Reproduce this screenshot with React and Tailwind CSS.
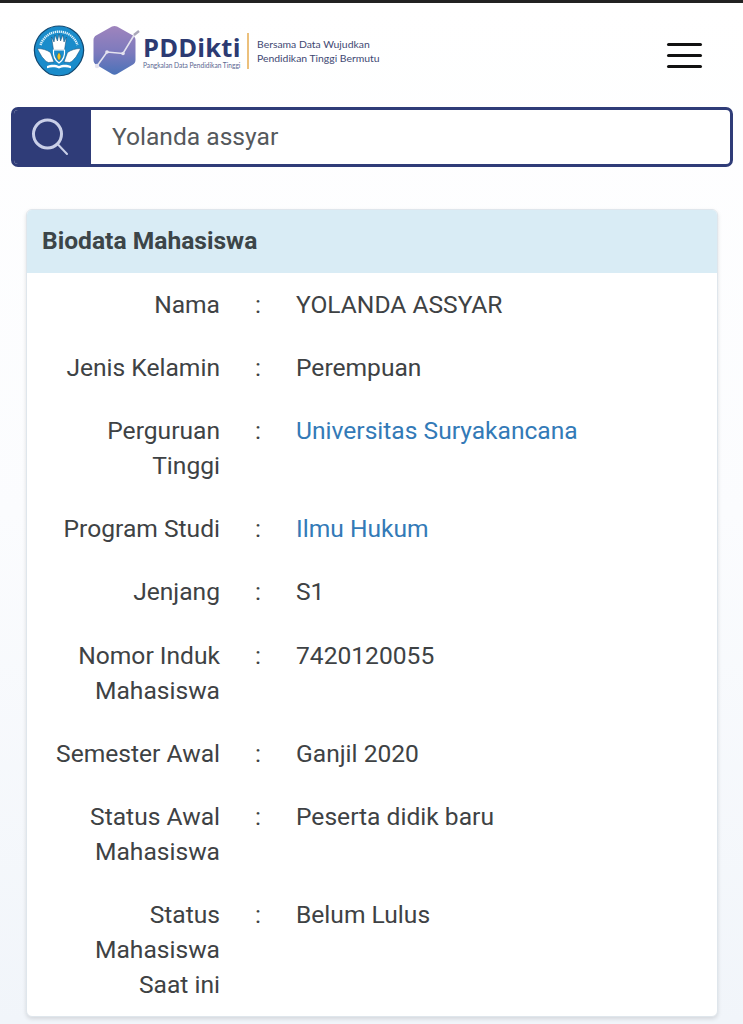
const rows = [
  { label: 'Nama', value: 'YOLANDA ASSYAR' },
  { label: 'Jenis Kelamin', value: 'Perempuan' },
  { label: 'Perguruan Tinggi', value: 'Universitas Suryakancana', link: true },
  { label: 'Program Studi', value: 'Ilmu Hukum', link: true },
  { label: 'Jenjang', value: 'S1' },
  { label: 'Nomor Induk Mahasiswa', value: '7420120055' },
  { label: 'Semester Awal', value: 'Ganjil 2020' },
  { label: 'Status Awal Mahasiswa', value: 'Peserta didik baru' },
  { label: 'Status Mahasiswa Saat ini', value: 'Belum Lulus' },
];

function Emblem() {
  return (
    <svg width="52" height="52" viewBox="0 0 52 52" className="shrink-0">
      <path d="M26 1 C31 1 36 2.5 40 5.5 C44.5 8.5 48.5 14 50 20 C51.5 26 50.5 31 48 36 C45 41.5 40.5 46 35.5 49 C30 51 22 51 16.5 49 C11.5 46 7 41.5 4 36 C1.5 31 0.5 26 2 20 C3.5 14 7.5 8.5 12 5.5 C16 2.5 21 1 26 1 Z" fill="#1a8ccb" stroke="#12476f" strokeWidth="1.2" />
      <path d="M7.5 20 A19.5 19.5 0 0 1 44.5 20" fill="none" stroke="#dff1fa" strokeWidth="2.4" strokeDasharray="1.3 0.7" />
      <path d="M18.5 12 L20.5 25 L31.5 25 L33.5 12 L31 17 L29.8 10 L27.6 16 L26 9 L24.4 16 L22.2 10 L21 17 Z" fill="#fff" stroke="#12476f" strokeWidth="0.5" />
      <path d="M4.5 23.5 C9 23.5 14 25 17.5 27.5 L21 37 L15.5 37.5 C12 36.5 11 33.5 9 32 C7.5 29 5.5 26.5 4.5 23.5 Z" fill="#fff" stroke="#12476f" strokeWidth="0.5" />
      <path d="M47.5 23.5 C43 23.5 38 25 34.5 27.5 L31 37 L36.5 37.5 C40 36.5 41 33.5 43 32 C44.5 29 46.5 26.5 47.5 23.5 Z" fill="#fff" stroke="#12476f" strokeWidth="0.5" />
      <path d="M20.5 25 L31.5 25 C32 30 30.5 35 26 38 C21.5 35 20 30 20.5 25 Z" fill="#1a8ccb" stroke="#fff" strokeWidth="1.2" />
      <path d="M26 27.5 C28.4 30 28.6 32.8 26 35.5 C23.4 32.8 23.6 30 26 27.5 Z" fill="#f3c322" stroke="#12476f" strokeWidth="0.4" />
      <path d="M14 41 C18.5 39 23 39.5 26 41 C29 39.5 33.5 39 38 41 L38 43.2 C33.5 41.6 29 42 26 43.6 C23 42 18.5 41.6 14 43.2 Z" fill="#fff" />
    </svg>
  );
}

function HexLogo() {
  return (
    <svg width="48" height="52" viewBox="0 0 48 52" className="shrink-0">
      <defs>
        <linearGradient id="hexFill" x1="0" y1="0" x2="0" y2="1">
          <stop offset="0" stopColor="#9f84bd" />
          <stop offset="0.55" stopColor="#7c7abd" />
          <stop offset="1" stopColor="#4a72b8" />
        </linearGradient>
      </defs>
      <path d="M19 1.5 C20.5 0.7 22.5 0.7 24 1.5 L40 10.5 C41.5 11.5 42.5 13 42.5 15 L42.5 35 C42.5 37 41.5 38.5 40 39.5 L24 49 C22.5 50 20.5 50 19 49 L3 39.5 C1.5 38.5 0.5 37 0.5 35 L0.5 15 C0.5 13 1.5 11.5 3 10.5 Z" fill="url(#hexFill)" />
      <path d="M4 41 L14 27 L30 28.5 L41.5 9.5" fill="none" stroke="#e4e3ef" strokeWidth="1.6" />
      <path d="M41 10 L46 6" fill="none" stroke="#a9a6b8" strokeWidth="2.4" />
      <circle cx="4" cy="41" r="2.2" fill="#e4e3ef" />
      <circle cx="14" cy="27" r="1.8" fill="#e4e3ef" />
      <circle cx="30" cy="28.5" r="1.8" fill="#e4e3ef" />
    </svg>
  );
}

export default function App() {
  return (
    <div className="h-[1024px] overflow-hidden border-t-[3px] border-[#222222] bg-gradient-to-b from-white via-[#fbfcfe] to-[#f1f5fa] font-['Roboto',sans-serif] text-[24.6px] leading-[35.1px] text-[#3e4244]">
      <header className="flex h-[104px] items-start justify-between pl-[33px] pr-[41px]">
        <div className="flex items-center pt-[22px]">
          <Emblem />
          <div className="ml-[8px]">
            <HexLogo />
          </div>
          <div className="ml-[2px] w-[100px] font-['Open_Sans',sans-serif]">
            <div className="mt-[2px] h-[26px] text-[25.5px] leading-[26px] font-bold tracking-[0.2px] text-[#2c3a72]">PDDikti</div>
            <div className="mt-[1px] font-['Lato',sans-serif] text-[6.6px] leading-[9px] whitespace-nowrap text-[#5a6690]">Pangkalan Data Pendidikan Tinggi</div>
          </div>
          <div className="ml-[4px] h-[36px] w-[2px] bg-[#ecc07c]" />
          <div className="ml-[8px] font-['Lato',sans-serif] text-[10.4px] leading-[14px] whitespace-nowrap text-[#3e4873]">
            <div>Bersama Data Wujudkan</div>
            <div>Pendidikan Tinggi Bermutu</div>
          </div>
        </div>
        <div className="mt-[40px] flex w-[35px] flex-col gap-[8.5px]">
          <div className="h-[2.5px] rounded-full bg-[#111111]" />
          <div className="h-[2.5px] rounded-full bg-[#111111]" />
          <div className="h-[2.5px] rounded-full bg-[#111111]" />
        </div>
      </header>

      <div className="ml-[11px] mr-[10px] flex h-[60px] overflow-hidden rounded-[7px] border-[3px] border-[#2f3c78] bg-white">
        <div className="flex w-[77px] items-center justify-center bg-[#2f3c78] pr-[5px]">
          <svg width="40" height="40" viewBox="0 0 40 40" fill="none">
            <circle cx="17.5" cy="17" r="14" stroke="#c9cfe8" strokeWidth="3" />
            <path d="M28 27.5 L37 37" stroke="#c9cfe8" strokeWidth="2" strokeLinecap="round" />
          </svg>
        </div>
        <div className="flex items-center pl-[21px] text-[#55595c]">Yolanda assyar</div>
      </div>

      <div className="ml-[26px] mr-[25px] mt-[42px] overflow-hidden rounded-[6px] border border-[#dfe6ec] bg-white shadow-[0_2px_4px_rgba(0,0,0,0.12)]">
        <div className="flex h-[63px] items-center bg-[#d9ecf5] pb-[1px] pl-[15px] font-bold text-[#3c4548]">Biodata Mahasiswa</div>
        <div>
          {rows.map((r) => (
            <div key={r.label} className="flex py-[14px]">
              <div className="ml-[15px] w-[178px] text-right">{r.label}</div>
              <div className="w-[76px] text-center">:</div>
              <div className={r.link ? 'text-[#337ab7]' : ''}>{r.value}</div>
            </div>
          ))}
        </div>
      </div>
    </div>
  );
}
